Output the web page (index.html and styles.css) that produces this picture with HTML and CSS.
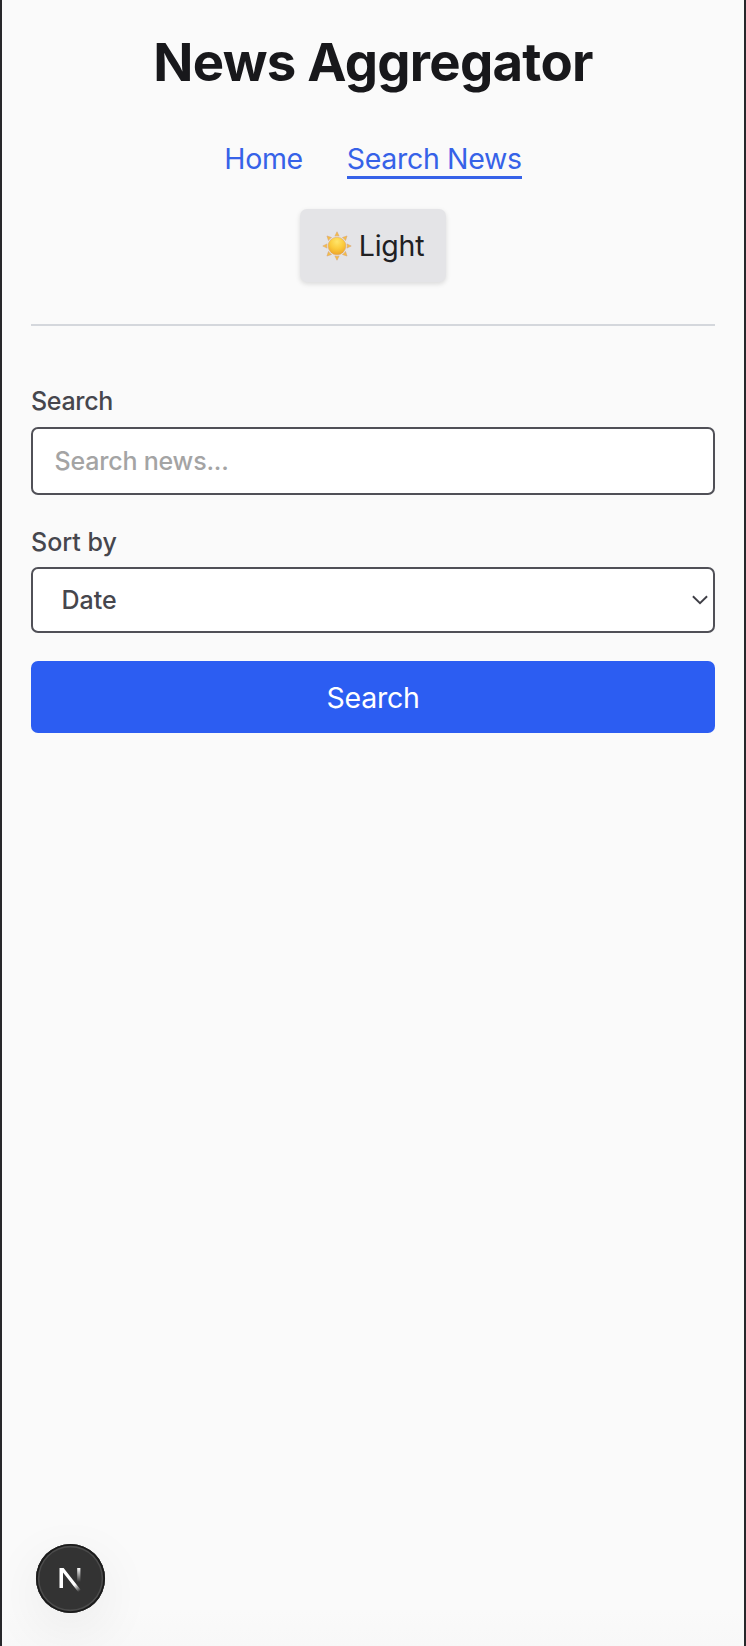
FILE: index.html
```html
<!DOCTYPE html>
<html lang="en">
<head>
<meta charset="utf-8">
<title>News Aggregator</title>
<link rel="stylesheet" href="styles.css">
</head>
<body>
<div class="page">
  <header class="header">
    <h1 class="title">News Aggregator</h1>
    <nav class="nav">
      <a class="link">Home</a>
      <a class="link link-active">Search News</a>
    </nav>
    <button class="theme" type="button">
      <svg class="sun" viewBox="0 0 30 30">
        <defs>
          <radialGradient id="sunFill" cx=".5" cy=".25" r=".75">
            <stop offset="0" stop-color="#ffe56a"/>
            <stop offset=".55" stop-color="#fbca3b"/>
            <stop offset="1" stop-color="#eda52c"/>
          </radialGradient>
        </defs>
        <g fill="#f6bf3f" stroke="#dba878" stroke-width=".6">
          <path id="ray" d="M15 .8 17.1 5.1Q15 4.3 12.9 5.1Z"/>
          <use href="#ray" transform="rotate(45 15 15)"/>
          <use href="#ray" transform="rotate(90 15 15)"/>
          <use href="#ray" transform="rotate(135 15 15)"/>
          <use href="#ray" transform="rotate(180 15 15)"/>
          <use href="#ray" transform="rotate(225 15 15)"/>
          <use href="#ray" transform="rotate(270 15 15)"/>
          <use href="#ray" transform="rotate(315 15 15)"/>
        </g>
        <circle cx="15" cy="15" r="8.8" fill="url(#sunFill)" stroke="#dfa35a" stroke-width=".5"/>
      </svg>
      <span class="theme-text">Light</span>
    </button>
  </header>
  <main class="form">
    <label class="label" for="q">Search</label>
    <input class="field input" id="q" type="text" placeholder="Search news...">
    <div class="label label-sort">Sort by</div>
    <div class="field select">
      <span class="select-text">Date</span>
      <svg class="chevron" viewBox="0 0 16 10"><path d="M.9 1.3 8 8.2 15.1 1.3" fill="none" stroke="#3f3f46" stroke-width="1.9"/></svg>
    </div>
    <button class="submit" type="button"><span class="submit-text">Search</span></button>
  </main>
  <div class="badge">
    <svg class="badge-logo" viewBox="0 0 24 26">
      <defs>
        <linearGradient id="diag" gradientUnits="userSpaceOnUse" x1="13" y1="13" x2="21" y2="24">
          <stop offset="0" stop-color="#fff"/><stop offset=".4" stop-color="#fff"/><stop offset="1" stop-color="#fff" stop-opacity="0"/>
        </linearGradient>
        <linearGradient id="stem" x1="0" y1="0" x2="0" y2="1">
          <stop offset="0" stop-color="#fff"/><stop offset="1" stop-color="#fff" stop-opacity="0"/>
        </linearGradient>
      </defs>
      <path d="M.5 21V1H4.6L22.2 23.5 19.6 25.5 4 5.6V21Z" fill="url(#diag)"/>
      <path d="M18.2 1H21.4V15H18.2Z" fill="url(#stem)"/>
    </svg>
  </div>
</div>
</body>
</html>
```
FILE: styles.css
```css
* { box-sizing: border-box; }
body {
  margin: 0;
  background: #fafafa;
  font-family: Inter, "Liberation Sans", sans-serif;
}
.page {
  height: 1646px;
  padding: 30px 29px 0;
  border-left: 2px solid #27272a;
  border-right: 2px solid #27272a;
  background: linear-gradient(#fafafa 1610px, #f8f8f8 1646px);
  overflow: hidden;
}
.header {
  display: flex;
  flex-direction: column;
  align-items: center;
  height: 296px;
  border-bottom: 2px solid #d4d7dc;
}
.title {
  margin: 0;
  font-size: 52.7px;
  line-height: 64px;
  font-weight: 700;
  letter-spacing: -0.72px;
  color: #18181b;
  white-space: nowrap;
}
.nav {
  display: flex;
  gap: 44px;
  margin-top: 44px;
}
.link {
  height: 41px;
  font-size: 28.5px;
  line-height: 41px;
  letter-spacing: -0.33px;
  color: #3662e8;
  white-space: nowrap;
}
.link-active { border-bottom: 3px solid #3662e8; }
.theme {
  display: flex;
  align-items: center;
  justify-content: center;
  gap: 7px;
  width: 146px;
  height: 73px;
  margin-top: 30px;
  padding: 0;
  border: 0;
  border-radius: 7px;
  background: #e4e4e7;
  box-shadow: 0 2px 5px rgba(0, 0, 0, .13);
  font-family: inherit;
  font-size: 28.5px;
  letter-spacing: -0.25px;
  color: #202023;
}
.sun { width: 30px; height: 30px; }
.form {
  display: flex;
  flex-direction: column;
  padding-top: 57px;
}
.label {
  height: 36px;
  font-size: 25px;
  line-height: 36px;
  font-weight: 500;
  letter-spacing: -0.32px;
  color: #46464d;
}
.label-sort { margin-top: 29px; letter-spacing: 0; }
.field {
  width: 100%;
  margin-top: 8px;
  border: 2px solid #505057;
  border-radius: 7px;
  background: #fff;
  font-family: inherit;
  font-size: 25px;
  font-weight: 500;
  color: #46464d;
}
.input {
  height: 68px;
  padding: 0 21.5px;
  letter-spacing: -0.2px;
  outline: none;
}
.input::placeholder { color: #a4a4a4; opacity: 1; }
.select {
  display: flex;
  align-items: center;
  justify-content: space-between;
  height: 66px;
  margin-top: 7px;
  padding: 0 5px 0 28.5px;
}
.select-text { letter-spacing: 0; }
.chevron { width: 16px; height: 10px; }
.submit {
  height: 72px;
  margin-top: 28px;
  border: 0;
  border-radius: 7px;
  background: #2c5df2;
  font-family: inherit;
  font-size: 28.5px;
  letter-spacing: -0.25px;
  color: #fff;
}
.badge {
  position: absolute;
  left: 36px;
  top: 1544px;
  display: flex;
  align-items: center;
  justify-content: center;
  width: 69px;
  height: 69px;
  border-radius: 50%;
  background: #333;
  box-shadow: inset 0 0 0 1.8px #1b1b1b, inset 0 0 0 3.4px #4b4b4b, 0 16px 56px rgba(0, 0, 0, .07);
}
.badge-logo { width: 24px; height: 26px; margin-top: 3px; }
```
